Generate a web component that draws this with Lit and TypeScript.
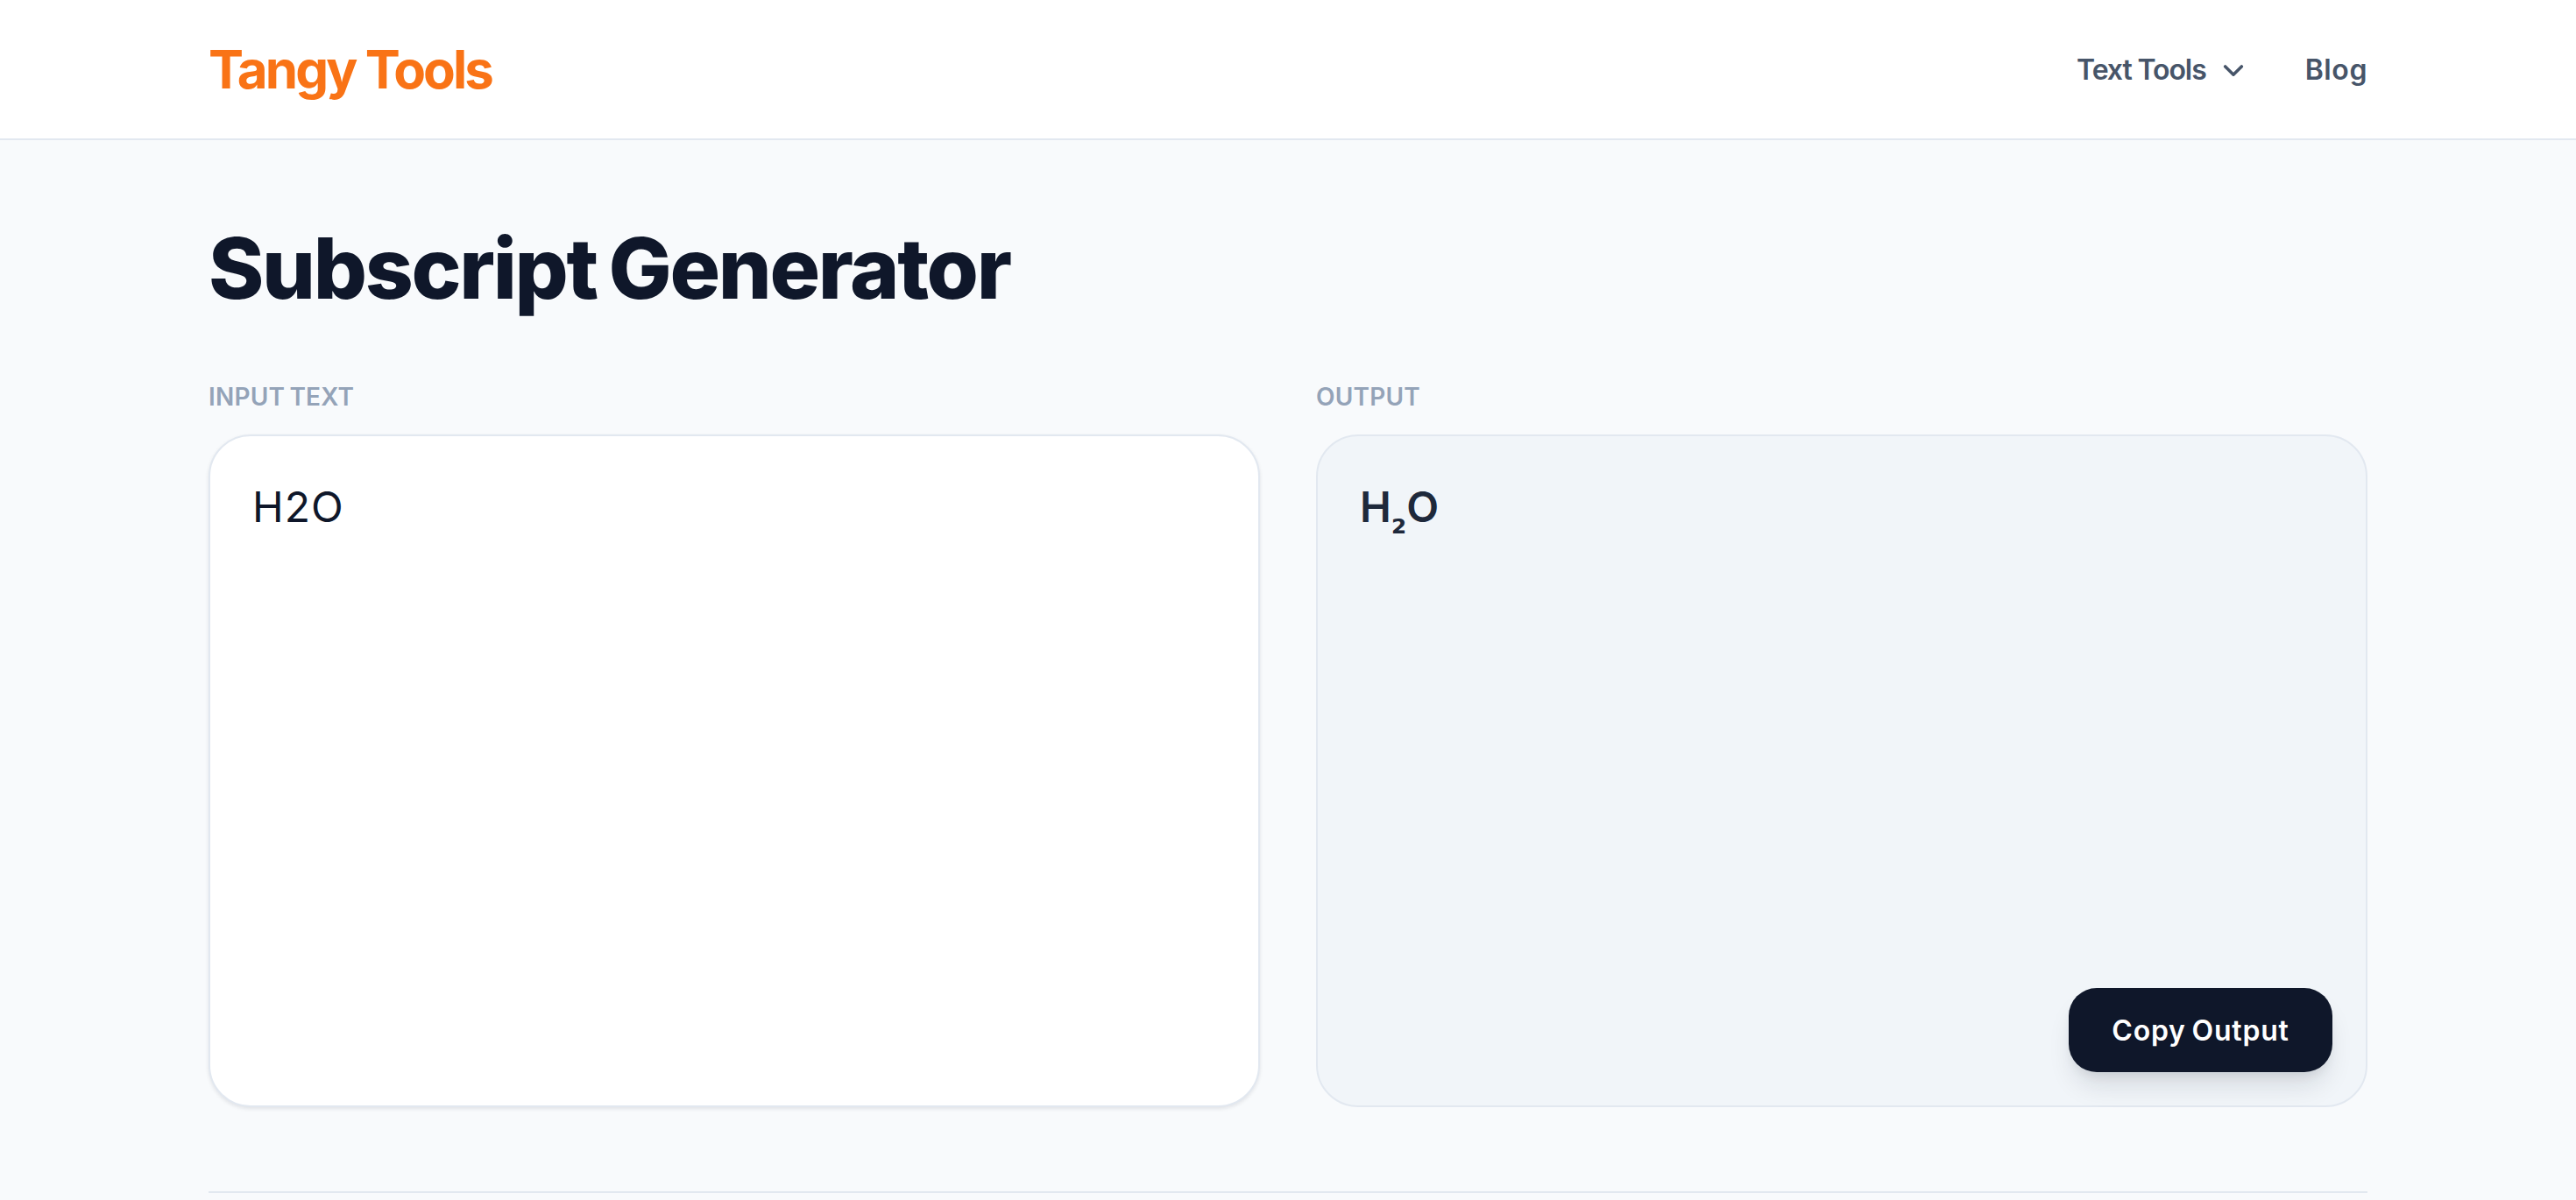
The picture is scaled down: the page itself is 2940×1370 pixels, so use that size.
import { LitElement, html, css } from "lit";
import { customElement } from "lit/decorators.js";

@customElement("app-root")
export class AppRoot extends LitElement {
  static styles = css`
    :host { display: block; min-height: 100vh; background: #f8fafc; font-family: Inter, "Liberation Sans", sans-serif; color: #0f172a; }
    * { box-sizing: border-box; }
    .topbar { height: 160px; background: #fff; border-bottom: 2px solid #e2e8f0; display: flex; justify-content: center; }
    .wrap { width: 2464px; }
    .topbar .wrap { display: flex; align-items: center; justify-content: space-between; }
    .logo { font-size: 60px; font-weight: 700; letter-spacing: -2.9px; color: #f97316; line-height: 80px; }
    nav { display: flex; align-items: center; gap: 68px; font-size: 32px; font-weight: 600; color: #475569; line-height: 40px; padding-top: 2px; }
    .menu { display: flex; align-items: center; gap: 17px; letter-spacing: -1.1px; }
    .menu svg { width: 28px; height: 28px; display: block; }
    .blog { letter-spacing: 0.6px; }
    main { display: flex; justify-content: center; }
    h1 { margin: 0; padding-top: 86px; height: 280px; font-size: 96px; line-height: 120px; font-weight: 800; letter-spacing: -2.3px; word-spacing: -5px; color: #0f172a; }
    .cols { display: grid; grid-template-columns: 1200px 1200px; gap: 64px; }
    .label { font-size: 28px; line-height: 26px; font-weight: 600; color: #94a3b8; height: 56px; letter-spacing: 0.2px; word-spacing: -2px; }
    .box { position: relative; height: 768px; border-radius: 48px; border: 2px solid #e2e8f0; padding: 48px; font-size: 48px; line-height: 66px; }
    .in { background: #fff; box-shadow: 0 2px 4px rgba(15, 23, 42, 0.1); }
    textarea { display: block; width: 100%; height: 100%; border: 0; outline: 0; padding: 0; margin: 0; background: transparent; resize: none; font: inherit; letter-spacing: 1px; color: #0f172a; }
    .out { background: #f1f5f9; color: #1e293b; font-weight: 600; }
    .sub { font-family: "DejaVu Sans", sans-serif; font-weight: 700; font-size: 40px; line-height: 0; vertical-align: -13px; }
    button { position: absolute; right: 38px; bottom: 38px; width: 301px; height: 96px; border: 0; border-radius: 32px; background: #0f172a; color: #fff; font: 600 32px/40px Inter, "Liberation Sans", sans-serif; letter-spacing: 0.8px; word-spacing: -2px; box-shadow: 0 20px 30px -6px rgba(15, 23, 42, 0.12), 0 8px 12px -4px rgba(15, 23, 42, 0.08); padding: 2px 0 0; }
    .rule { margin-top: 96px; border-top: 2px solid #e2e8f0; height: 8px; }
  `;
  render() {
    return html`
      <header class="topbar"><div class="wrap">
        <div class="logo">Tangy Tools</div>
        <nav>
          <div class="menu">Text Tools
            <svg viewBox="0 0 24 24" fill="none" stroke="currentColor" stroke-width="3" stroke-linecap="round" stroke-linejoin="round"><path d="M4 8.5 L12 16.5 L20 8.5"/></svg>
          </div>
          <div class="blog">Blog</div>
        </nav>
      </div></header>
      <main><div class="wrap">
        <h1>Subscript Generator</h1>
        <div class="cols">
          <section>
            <div class="label">INPUT TEXT</div>
            <div class="box in"><textarea .value=${"H2O"}></textarea></div>
          </section>
          <section>
            <div class="label">OUTPUT</div>
            <div class="box out">H<span class="sub">₂</span>O<button>Copy Output</button></div>
          </section>
        </div>
        <div class="rule"></div>
      </div></main>
    `;
  }
}
